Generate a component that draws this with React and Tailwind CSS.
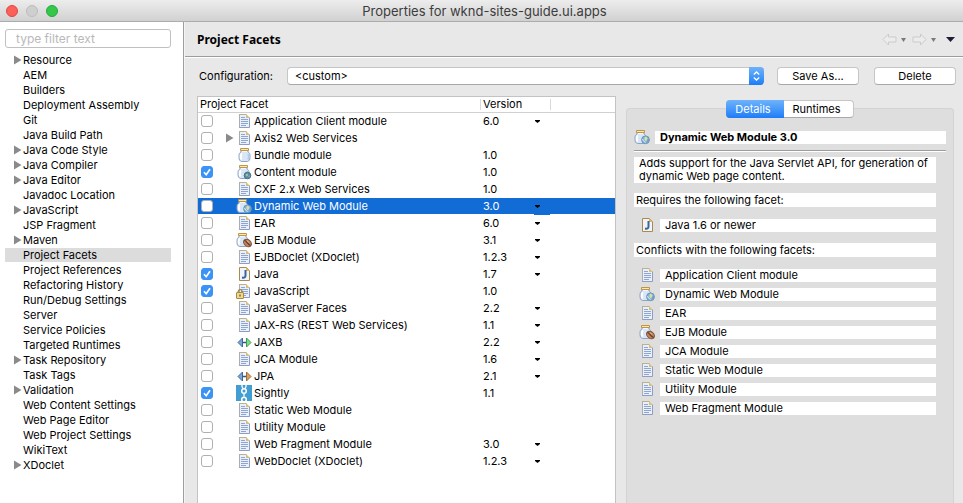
import React, { useState } from "react";

const TREE = [
  ["Resource", true],
  ["AEM", false],
  ["Builders", false],
  ["Deployment Assembly", false],
  ["Git", false],
  ["Java Build Path", false],
  ["Java Code Style", true],
  ["Java Compiler", true],
  ["Java Editor", true],
  ["Javadoc Location", false],
  ["JavaScript", true],
  ["JSP Fragment", false],
  ["Maven", true],
  ["Project Facets", false],
  ["Project References", false],
  ["Refactoring History", false],
  ["Run/Debug Settings", false],
  ["Server", false],
  ["Service Policies", false],
  ["Targeted Runtimes", false],
  ["Task Repository", true],
  ["Task Tags", false],
  ["Validation", true],
  ["Web Content Settings", false],
  ["Web Page Editor", false],
  ["Web Project Settings", false],
  ["WikiText", false],
  ["XDoclet", true],
];

const FACETS = [
  { name: "Application Client module", icon: "doc", version: "6.0", menu: true },
  { name: "Axis2 Web Services", icon: "doc", parent: true },
  { name: "Bundle module", icon: "bundle", version: "1.0" },
  { name: "Content module", icon: "content", version: "1.0", checked: true },
  { name: "CXF 2.x Web Services", icon: "doc", version: "1.0" },
  { name: "Dynamic Web Module", icon: "web", version: "3.0", menu: true },
  { name: "EAR", icon: "doc", version: "6.0", menu: true },
  { name: "EJB Module", icon: "ejb", version: "3.1", menu: true },
  { name: "EJBDoclet (XDoclet)", icon: "doc", version: "1.2.3", menu: true },
  { name: "Java", icon: "java", version: "1.7", menu: true, checked: true },
  { name: "JavaScript", icon: "locked", version: "1.0", checked: true },
  { name: "JavaServer Faces", icon: "doc", version: "2.2", menu: true },
  { name: "JAX-RS (REST Web Services)", icon: "doc", version: "1.1", menu: true },
  { name: "JAXB", icon: "jaxb", version: "2.2", menu: true },
  { name: "JCA Module", icon: "doc", version: "1.6", menu: true },
  { name: "JPA", icon: "jpa", version: "2.1", menu: true },
  { name: "Sightly", icon: "sightly", version: "1.1", checked: true },
  { name: "Static Web Module", icon: "doc" },
  { name: "Utility Module", icon: "doc" },
  { name: "Web Fragment Module", icon: "doc", version: "3.0", menu: true },
  { name: "WebDoclet (XDoclet)", icon: "doc", version: "1.2.3", menu: true },
];

const CONFLICTS = [
  ["Application Client module", "doc"],
  ["Dynamic Web Module", "web"],
  ["EAR", "doc"],
  ["EJB Module", "ejb"],
  ["JCA Module", "doc"],
  ["Static Web Module", "doc"],
  ["Utility Module", "doc"],
  ["Web Fragment Module", "doc"],
];

function Doc() {
  return (
    <>
      <path d="M3.5 1.5h7l3 3v10h-10z" fill="#e9f0fa" />
      <path d="M3.5 15V1" stroke="#a9adb4" />
      <path d="M3 1.5h7.500" stroke="#bdb18c" />
      <path d="M13.5 4.500v10h-10" fill="none" stroke="#8c9dc6" />
      <path d="M10 1l4 4h-4z" fill="#d8bd82" />
      <path d="M5 4.500h4M5 6.500h7M5 8.500h7M5 10.500h7M5 12.500h5" stroke="#8fa5d0" />
    </>
  );
}

function Jar({ x = 0 }) {
  return (
    <g transform={`translate(${x} 0)`}>
      <path
        d="M5 3.500h7v1.500c1.300.6 2 1.800 2 3.500v2c0 2.200-.8 3.400-2.300 4h-6.400c-1.500-.6-2.300-1.800-2.300-4v-2c0-1.700.7-2.900 2-3.500z"
        fill="#d8e6f7"
        stroke="#8fa3c3"
      />
      <path d="M6 6.500c-1.500 1-1.500 4.500-.5 6" fill="none" stroke="#fff" strokeWidth="2" />
      <path d="M6 4.500h5" stroke="#f4f8fd" />
      <path d="M12 7c.8 1.500.8 4-.2 5.500" fill="none" stroke="#b4cbea" strokeWidth="1.500" />
      <rect x="4" y="1" width="9" height="3" rx="1" fill="#c0953f" />
      <path d="M5 2.500h7" stroke="#f7e9b8" />
    </g>
  );
}

function Arrows({ color, edge }) {
  return (
    <>
      <path d="M6 8.500h6" stroke="#35587c" strokeWidth="1.500" />
      <path d="M2 8.500l4.500-4.500v9z" fill="#7aa8dc" stroke="#3f6697" />
      <path d="M15 8.500l-4.500-4.500v9z" fill={color} stroke={edge} />
    </>
  );
}

function FacetIcon({ name }) {
  return (
    <svg width="16" height="16" viewBox="0 0 16 16" className="block shrink-0" aria-hidden="true">
      {name === "doc" && <Doc />}
      {name === "bundle" && <Jar />}
      {name === "content" && (
        <>
          <Jar x={-1} />
          <circle cx="11.500" cy="11.500" r="3.300" fill="#5d8ba3" stroke="#456f8a" />
          <path d="M9.500 10.500l2-1 .5 2-1.500 1zM12.500 12l1.500-.5-1 2z" fill="#a5cf9c" />
        </>
      )}
      {name === "web" && (
        <>
          <Jar x={-2} />
          <circle cx="11.500" cy="10.800" r="3.900" fill="#7fb0da" stroke="#6f93b5" />
          <path d="M10.500 8.500l1.500-1 1.500 2-1.500 3-1.500-1.500z" fill="#d6e2a4" />
          <path d="M8.500 10l1 2 2 1.500" stroke="#dcecf8" fill="none" />
          <path d="M13.500 12.500l1-2" stroke="#5d97a0" />
        </>
      )}
      {name === "ejb" && (
        <>
          <Jar x={-2} />
          <g transform="rotate(38 11.500 11)">
            <ellipse cx="11.500" cy="11" rx="4.300" ry="3.200" fill="#b98360" stroke="#85563a" />
            <path d="M7.500 11c2-1.500 5 1.500 8 0" fill="none" stroke="#5a3520" />
            <path d="M9.500 9.500h3" stroke="#dab294" />
          </g>
        </>
      )}
      {name === "java" && (
        <>
          <path d="M3.500 1.500h7l3 3v10h-10z" fill="#f1f5fb" stroke="#a98a4c" />
          <path d="M10 1l4 4h-4z" fill="#dcb66a" />
          <path d="M9.500 4v5.500c0 2-1.200 2.500-3.500 2" fill="none" stroke="#3a669c" strokeWidth="2" />
        </>
      )}
      {name === "locked" && (
        <>
          <Doc />
          <path d="M2.300 10V8.500a1.900 1.900 0 0 1 3.800 0V10" fill="none" stroke="#a58a45" strokeWidth="1.300" />
          <rect x=".5" y="9.500" width="7" height="6" rx=".5" fill="#ecd795" stroke="#a98a3c" />
          <path d="M4 11.500v2" stroke="#6f5a26" strokeWidth="1.300" />
        </>
      )}
      {name === "jaxb" && <Arrows color="#7fdc8c" edge="#3d9c52" />}
      {name === "jpa" && <Arrows color="#dba062" edge="#a06c36" />}
      {name === "sightly" && (
        <>
          <path d="M0 0h16v16H0z" fill="#419dd2" />
          <circle cx="8" cy="6" r="2.300" fill="none" stroke="#fff" strokeWidth="1.500" />
          <circle cx="8" cy="14.500" r="2.300" fill="none" stroke="#fff" strokeWidth="1.500" />
          <path d="M6 0v1.500l1 2M10 0v1.500l-1 2M8 8.500v3" stroke="#fff" fill="none" strokeWidth="1.300" />
        </>
      )}
    </svg>
  );
}

function Disclosure() {
  return (
    <svg width="8" height="10" viewBox="0 0 8 10" className="block" aria-hidden="true">
      <path d="M0 .5l7.500 4.500L0 9.500z" fill="#8a8a8a" />
    </svg>
  );
}

function TitleBar() {
  return (
    <header className="flex h-[22px] shrink-0 items-center border-b border-[#acacac] bg-linear-to-b from-[#ededed] to-[#d1d1d1]">
      <div className="flex flex-1 gap-2 pl-1.5">
        <button aria-label="Close" className="size-3 rounded-full border border-[#e2463f] bg-[#fc605b]" />
        <button aria-label="Minimize" className="size-3 rounded-full border border-[#bcbcbc] bg-[#cfcfcf]" />
        <button aria-label="Zoom" className="size-3 rounded-full border border-[#27a838] bg-[#34c84a]" />
      </div>
      <h1 className="text-[13px] leading-5 text-[#3c3c3c]">Properties for wknd-sites-guide.ui.apps</h1>
      <div className="flex-1" />
    </header>
  );
}

function Sidebar() {
  return (
    <nav className="w-[184px] shrink-0 border-r border-[#9e9e9e] bg-white pt-[7px] pr-3 pl-[5px]">
      <input
        type="text"
        aria-label="Filter"
        placeholder="type filter text"
        className="block h-[19px] w-full rounded-[3px] border border-[#c0c0c0] bg-white px-[10px] text-[12px] text-black placeholder:text-[#b9b9b9]"
      />
      <ul className="mt-[5px]">
        {TREE.map(([label, parent]) => (
          <li
            key={label}
            className={
              label === "Project Facets"
                ? "mb-px flex h-[14px] items-center bg-[#dcdcdc]"
                : "mb-px flex h-[14px] items-center"
            }
          >
            <span className="w-[18px] shrink-0 pl-[9px]">{parent && <Disclosure />}</span>
            <a href="#" className="leading-[14px]">{label}</a>
          </li>
        ))}
      </ul>
    </nav>
  );
}

function NavArrow({ flip }) {
  return (
    <svg width="15" height="13" viewBox="0 0 15 13" className={flip ? "-scale-x-100" : ""} aria-hidden="true">
      <path d="M1 6.500L6.500 1v3H14v5H6.500v3z" fill="#ececec" stroke="#cbcbcb" />
    </svg>
  );
}

function SmallArrow() {
  return (
    <svg width="5" height="4" viewBox="0 0 5 4" aria-hidden="true">
      <path d="M0 0h5L2.500 4z" fill="#7a7a7a" />
    </svg>
  );
}

function PageHeader() {
  return (
    <div className="flex h-[36px] items-center justify-between border-b border-white pr-2 pl-3 shadow-[inset_0_-1px_0_#9c9c9c]">
      <h2 className="font-['Noto_Sans','Open_Sans',sans-serif] text-[12px] font-bold">Project Facets</h2>
      <div className="flex items-center">
        <button aria-label="Back" className="flex items-center gap-1">
          <NavArrow />
          <SmallArrow />
        </button>
        <button aria-label="Forward" className="ml-1.5 flex items-center gap-1">
          <NavArrow flip />
          <SmallArrow />
        </button>
        <button aria-label="View menu" className="ml-[10px]">
          <svg width="9" height="5" viewBox="0 0 9 5" aria-hidden="true">
            <path d="M0 0h9L4.500 5z" fill="#241a33" />
          </svg>
        </button>
      </div>
    </div>
  );
}

const PUSH =
  "h-[18px] w-[82px] shrink-0 rounded-[4px] border border-[#c6c6c6] border-b-[#a8a8a8] bg-white text-center leading-4";

function ConfigBar() {
  return (
    <div className="flex h-5 items-center pr-[7px] pl-[2px]">
      <label htmlFor="configuration" className="w-[88px] shrink-0">Configuration:</label>
      <div className="relative flex-1">
        <select
          id="configuration"
          className="block h-[18px] w-full appearance-none rounded-[4px] border border-[#c6c6c6] border-b-[#a8a8a8] bg-white pl-[7px] leading-4"
        >
          <option>&lt;custom&gt;</option>
        </select>
        <span className="pointer-events-none absolute inset-y-0 right-0 flex w-[15px] items-center justify-center rounded-r-[4px] bg-linear-to-b from-[#6db3fa] to-[#1a7cf8]">
          <svg width="7" height="10" viewBox="0 0 7 10" fill="none" stroke="#fff" strokeWidth="1.300" aria-hidden="true">
            <path d="M.8 3.500l2.700-2.500 2.700 2.500M.8 6.500l2.700 2.500 2.700-2.500" />
          </svg>
        </span>
      </div>
      <button className={`ml-[13px] ${PUSH}`}>Save As...</button>
      <button className={`ml-[15px] ${PUSH}`}>Delete</button>
    </div>
  );
}

function CheckBox({ id, checked, onChange }) {
  return (
    <span className="relative block size-3">
      <input
        id={id}
        type="checkbox"
        checked={checked}
        onChange={onChange}
        className="peer block size-3 appearance-none rounded-[3px] border border-[#b0b0b0] bg-white checked:border-[#3b93f5] checked:bg-[#3b93f5]"
      />
      <svg
        width="12"
        height="12"
        viewBox="0 0 12 12"
        className="pointer-events-none absolute inset-0 hidden peer-checked:block"
        fill="none"
        stroke="#fff"
        strokeWidth="1.700"
        aria-hidden="true"
      >
        <path d="M3 6.300l2.200 2.400L9 3.200" />
      </svg>
    </span>
  );
}

function FacetTable() {
  const [checked, setChecked] = useState(() => FACETS.map((f) => Boolean(f.checked)));
  const toggle = (i) => setChecked((list) => list.map((v, n) => (n === i ? !v : v)));
  return (
    <div className="min-w-0 flex-1 border border-b-0 border-[#c3c3c3] bg-white">
      <table className="w-full table-fixed border-separate border-spacing-0 text-left">
        <colgroup>
          <col className="w-[282px]" />
          <col className="w-[70px]" />
          <col />
        </colgroup>
        <thead>
          <tr className="h-4">
            <th className="border-b border-[#d0d0d0] p-0 pl-[2px] font-normal leading-[15px]">Project Facet</th>
            <th className="border-b border-[#d0d0d0] p-0 font-normal">
              <span className="block border-l border-[#d9d9d9] pl-[2px] leading-[11px]">Version</span>
            </th>
            <th className="border-b border-[#d0d0d0] p-0" aria-label="Actions">
              <span className="block h-[11px] border-l border-[#d9d9d9]" />
            </th>
          </tr>
        </thead>
        <tbody>
          {FACETS.map((f, i) => {
            const id = `facet-${i}`;
            const selected = f.name === "Dynamic Web Module";
            const cell = selected
              ? "border-b border-transparent bg-[#116cd6] bg-clip-padding p-0 text-white"
              : "border-b border-transparent p-0";
            return (
              <tr key={f.name} className="h-[17px]">
                <td className={cell}>
                  <div className="flex h-4 items-center pl-[3px]">
                    <CheckBox id={id} checked={checked[i]} onChange={() => toggle(i)} />
                    <span className="w-[23px] shrink-0 pl-[13px]">{f.parent && <Disclosure />}</span>
                    <FacetIcon name={f.icon} />
                    <label htmlFor={id} className="pl-[2px] leading-4 whitespace-nowrap">{f.name}</label>
                  </div>
                </td>
                <td className={cell}>
                  {f.menu ? (
                    <div className="relative">
                      <select
                        aria-label={`${f.name} version`}
                        className="block h-4 w-full appearance-none bg-transparent pl-[3px] leading-4"
                      >
                        <option>{f.version}</option>
                      </select>
                      <svg
                        width="5"
                        height="3"
                        viewBox="0 0 5 3"
                        className="pointer-events-none absolute top-[7px] right-[10px]"
                        aria-hidden="true"
                      >
                        <path d="M0 0h5v1L2.500 3 0 1z" fill="#000" />
                      </svg>
                      {selected && <span className="absolute top-4 right-0 h-px w-4 bg-[#116cd6]" />}
                    </div>
                  ) : (
                    <div className="h-4 pl-[3px] leading-4">{f.version}</div>
                  )}
                </td>
                <td className={cell} />
              </tr>
            );
          })}
        </tbody>
      </table>
    </div>
  );
}

function Details() {
  return (
    <section className="relative mt-3 w-[328px] shrink-0 rounded-t-[4px] border border-b-0 border-[#d3d3d3] bg-[#dedede] px-[7px] pt-5">
      <div
        role="tablist"
        className="absolute inset-x-0 -top-[9px] mx-auto flex h-[18px] w-[128px] rounded-[4px] border border-[#c6c6c6] border-b-[#a8a8a8] bg-white"
      >
        <button
          role="tab"
          aria-selected="true"
          className="-my-px -ml-px w-[58px] rounded-l-[4px] bg-linear-to-b from-[#6db3fa] to-[#1a7cf8] pr-1 leading-[18px] text-white"
        >
          Details
        </button>
        <button role="tab" aria-selected="false" className="flex-1 pr-1 leading-4">Runtimes</button>
      </div>
      <div className="flex h-4 items-center gap-[5px]">
        <FacetIcon name="web" />
        <h3 className="h-[13px] flex-1 bg-white pl-[5px] leading-[13px] font-bold">Dynamic Web Module 3.0</h3>
      </div>
      <hr className="mt-[5px] h-[2px] border-t border-b border-t-[#9c9c9c] border-b-white" />
      <div className="mt-[5px] pr-[10px]">
        <p className="bg-white pr-1 pl-[5px] leading-[13px]">
          Adds support for the Java Servlet API, for generation of dynamic Web page content.
        </p>
        <p className="mt-[10px] h-[14px] bg-white pl-[2px] leading-[14px]">Requires the following facet:</p>
        <div className="mt-[10px] flex h-4 items-center gap-[5px] pl-[5px]">
          <FacetIcon name="java" />
          <span className="h-[13px] flex-1 bg-white pl-[5px] leading-[13px]">Java 1.6 or newer</span>
        </div>
        <p className="mt-[10px] h-[14px] bg-white pl-[2px] leading-[14px]">Conflicts with the following facets:</p>
        <ul className="mt-[10px] flex flex-col gap-[3px]">
          {CONFLICTS.map(([label, icon]) => (
            <li key={label} className="flex h-4 items-center gap-[5px] pl-[5px]">
              <FacetIcon name={icon} />
              <span className="h-[13px] flex-1 bg-white pl-[5px] leading-[13px]">{label}</span>
            </li>
          ))}
        </ul>
      </div>
    </section>
  );
}

export default function App() {
  return (
    <div className="flex min-h-screen flex-col bg-[#e8e8e8] font-[Inter,'Liberation_Sans',sans-serif] text-[11px] text-black">
      <TitleBar />
      <div className="flex flex-1">
        <Sidebar />
        <main className="flex min-w-0 flex-1 flex-col border-l border-[#f4f4f4]">
          <PageHeader />
          <div className="flex flex-1 flex-col pt-2 pl-3">
            <ConfigBar />
            <div className="mt-[10px] flex flex-1 gap-[10px] pr-[9px]">
              <FacetTable />
              <Details />
            </div>
          </div>
        </main>
      </div>
    </div>
  );
}
